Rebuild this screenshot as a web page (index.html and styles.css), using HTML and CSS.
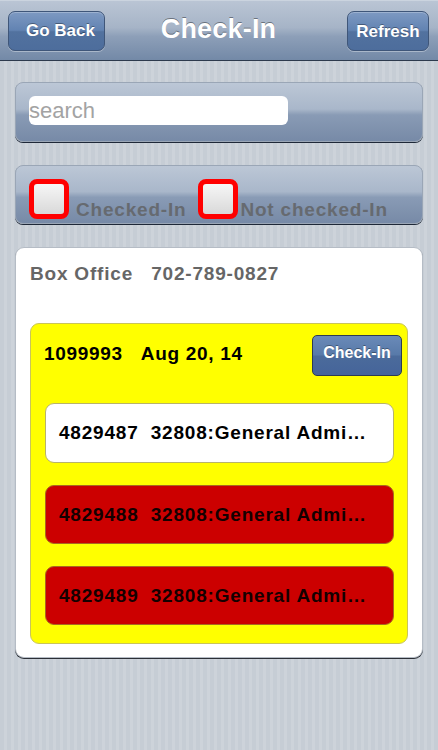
FILE: index.html
```html
<!DOCTYPE html>
<html>
<head>
<meta charset="utf-8">
<title>Check-In</title>
<link rel="stylesheet" href="styles.css">
</head>
<body>
<header class="nav">
  <button class="nav-btn back">Go Back</button>
  <h1 class="nav-title">Check-In</h1>
  <button class="nav-btn refresh">Refresh</button>
</header>
<main class="content">
  <section class="panel search-panel">
    <div class="search-input">search</div>
  </section>
  <section class="panel filter-panel">
    <label class="filter"><span class="box"></span><span class="filter-label">Checked-In</span></label>
    <label class="filter"><span class="box"></span><span class="filter-label tight">Not checked-In</span></label>
  </section>
  <section class="card">
    <div class="card-head">Box Office&nbsp;&nbsp;&nbsp;702-789-0827</div>
    <div class="group">
      <div class="group-head">
        <span class="group-title">1099993&nbsp;&nbsp;&nbsp;Aug 20, 14</span>
        <button class="check-btn">Check-In</button>
      </div>
      <div class="row white">4829487&nbsp;&nbsp;32808:General Admi…</div>
      <div class="row red">4829488&nbsp;&nbsp;32808:General Admi…</div>
      <div class="row red">4829489&nbsp;&nbsp;32808:General Admi…</div>
    </div>
  </section>
</main>
</body>
</html>
```
FILE: styles.css
```css
* { box-sizing: border-box; }
html, body { margin: 0; padding: 0; }
body {
  width: 438px;
  height: 750px;
  overflow: hidden;
  font-family: "Liberation Sans", Arial, sans-serif;
  background: repeating-linear-gradient(90deg, #c6cdd5 0px, #c6cdd5 4px, #cdd3da 4px, #cdd3da 7px);
}
.nav {
  height: 61px;
  display: grid;
  grid-template-columns: 1fr auto 1fr;
  align-items: start;
  padding: 10px 9px 0 8px;
  background: linear-gradient(#bac5d4 0%, #a6b4c7 45%, #8d9fb8 60%, #7389a7 100%);
  border-bottom: 1px solid #2d3a4d;
  border-top: 1px solid #cbd4df;
}
.nav-btn {
  height: 40px;
  border: 1px solid #3f5679;
  border-radius: 7px;
  background: linear-gradient(#7d99c2 0%, #6283b2 48%, #52729f 52%, #4d6d9c 100%);
  color: #fff;
  font-family: "Liberation Sans", Arial, sans-serif;
  font-weight: bold;
  font-size: 17px;
  text-shadow: 0 -1px 0 rgba(0,0,0,0.35);
  box-shadow: inset 0 1px 0 rgba(255,255,255,0.25), 0 1px 0 rgba(255,255,255,0.35);
  padding: 0;
}
.back { width: 97px; justify-self: start; padding-left: 8px; }
.refresh { width: 82px; justify-self: end; padding-top: 1px; }
.nav-title {
  margin: 3px 0 0 0;
  color: #fff;
  font-size: 27px;
  font-weight: bold;
  line-height: 30px;
  letter-spacing: 0.2px;
  text-shadow: 0 -1px 0 rgba(0,0,0,0.4);
}
.content {
  padding: 0 15px;
}
.panel {
  border-radius: 8px;
  border: 1px solid #9aa6b6;
  background: linear-gradient(#bcc7d6 0%, #a9b7ca 45%, #899bb5 55%, #778aa7 100%);
  box-shadow: 0 1px 0 #1e2838;
}
.search-panel {
  margin-top: 21px;
  height: 60px;
  padding: 13px;
}
.search-input {
  width: 259px;
  height: 29px;
  background: #fff;
  border-radius: 6px;
  color: #a3a3a3;
  font-size: 22px;
  line-height: 30px;
}
.filter-panel {
  margin-top: 23px;
  height: 59px;
  padding: 13px 13px 0 13px;
  display: flex;
  align-items: flex-start;
}
.filter {
  display: flex;
  align-items: flex-end;
}
.filter + .filter { margin-left: 12px; }
.box {
  width: 40px;
  height: 40px;
  border: 5px solid #ff0000;
  border-radius: 8px;
  background: linear-gradient(#f6f6f6, #d9d9d9);
  flex: none;
}
.filter-label {
  color: #666a70;
  font-weight: bold;
  font-size: 19px;
  letter-spacing: 0.8px;
  line-height: 19px;
  margin-left: 7px;
  margin-bottom: 0;
}
.filter-label.tight { margin-left: 2px; }
.card {
  margin-top: 23px;
  height: 411px;
  background: #fff;
  border-radius: 9px;
  border: 1px solid #b5bcc5;
  box-shadow: 0 1px 0 #2b2f36;
  padding: 14px;
}
.card-head {
  color: #666;
  font-weight: bold;
  font-size: 19px;
  letter-spacing: 0.8px;
  line-height: 24px;
  padding-left: 0;
}
.group {
  margin-top: 37px;
  height: 321px;
  background: #ffff00;
  border: 1px solid #c9c45a;
  border-radius: 9px;
  padding: 11px 5px 0 13px;
}
.group-head {
  display: flex;
  justify-content: space-between;
  align-items: flex-start;
  height: 41px;
}
.group-title {
  color: #000;
  font-weight: bold;
  font-size: 19px;
  letter-spacing: 0.7px;
  line-height: 20px;
  margin-top: 9px;
}
.check-btn {
  width: 90px;
  height: 41px;
  border: 1px solid #2c3b52;
  border-radius: 5px;
  background: linear-gradient(#6a8ab8 0%, #587aa9 48%, #4b6b9b 52%, #45649a 100%);
  color: #fff;
  font-family: "Liberation Sans", Arial, sans-serif;
  font-weight: bold;
  font-size: 16px;
  text-shadow: 0 -1px 0 rgba(0,0,0,0.35);
  padding: 0 0 6px 0;
}
.row {
  width: 349px;
  height: 60px;
  margin-top: 22px;
  margin-left: 1px;
  border-radius: 9px;
  border: 1px solid #b8b36a;
  padding-left: 13px;
  display: flex;
  align-items: center;
  color: #000;
  font-weight: bold;
  font-size: 19px;
  letter-spacing: 0.8px;
  white-space: nowrap;
}
.group-head + .row { margin-top: 27px; }
.row.white { background: #fff; }
.row.red { background: #cc0000; border-color: #a86a20; color: #140000; height: 59px; }
```
